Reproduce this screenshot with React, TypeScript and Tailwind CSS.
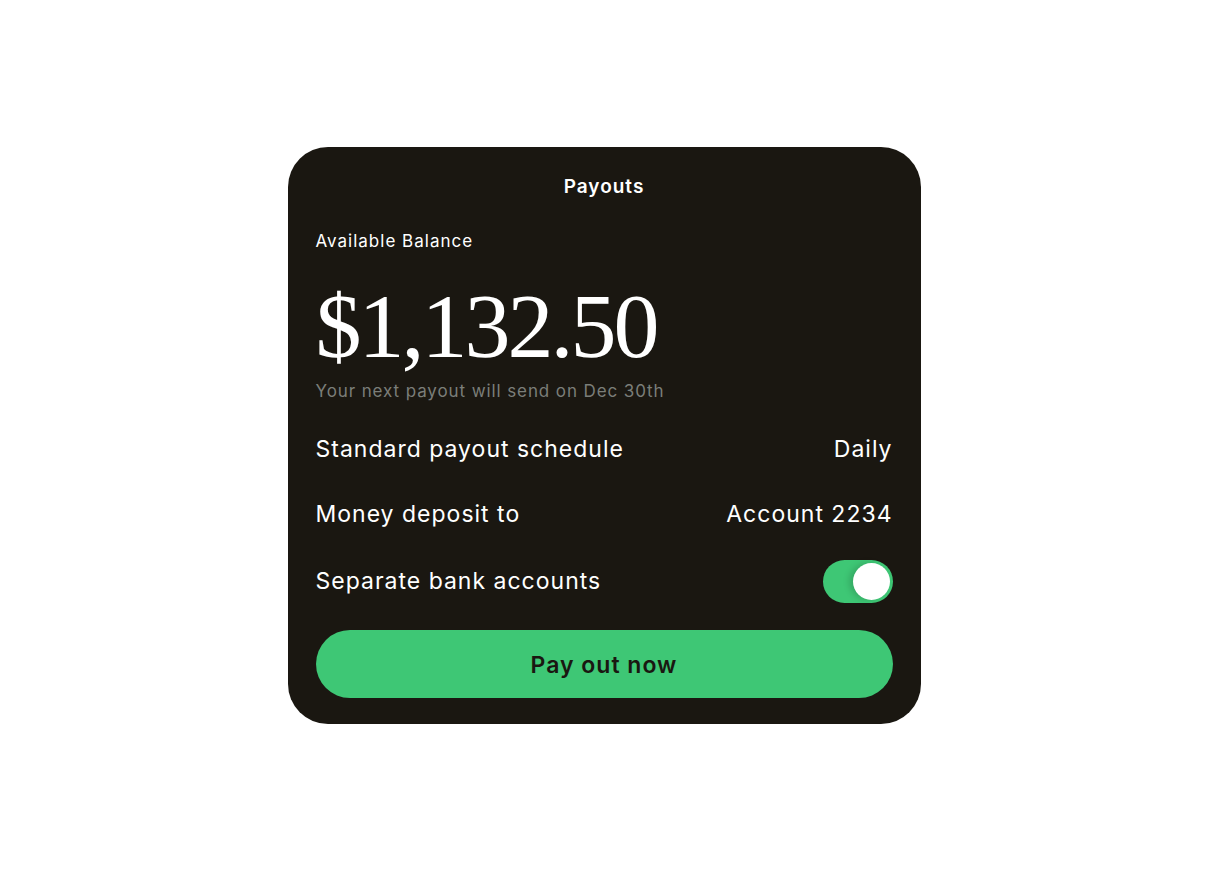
import { useState } from "react";

const sans = { fontFamily: "Inter, 'Liberation Sans', sans-serif" };

function Row({ label, value }: { label: string; value: string }) {
  return (
    <div className="flex h-[40px] items-center justify-between text-[23px] tracking-[1px] text-white">
      <span>{label}</span>
      <span>{value}</span>
    </div>
  );
}

export default function App() {
  const [separate, setSeparate] = useState(true);

  return (
    <div className="flex min-h-screen items-start justify-center bg-white pt-[147px]" style={sans}>
      <div className="flex h-[577px] w-[633px] flex-col rounded-[40px] bg-[#1a1711] px-7 pt-[28px]">
        <div className="text-center text-[19px] font-semibold leading-[24px] tracking-[1px] text-white">
          Payouts
        </div>

        <div className="mt-[30px] text-[17px] leading-[24px] tracking-[1px] text-white">
          Available Balance
        </div>

        <div
          className="mt-[27px] text-[92px] leading-none tracking-[-3px] text-white"
          style={{ fontFamily: "'Liberation Serif', serif" }}
        >
          $1,132.50
        </div>

        <div className="mt-[7px] text-[17px] leading-[24px] tracking-[0.9px] text-[#7b7e79]">
          Your next payout will send on Dec 30th
        </div>

        <div className="mt-[26px] flex flex-col gap-[25px]">
          <Row label="Standard payout schedule" value="Daily" />
          <Row label="Money deposit to" value="Account 2234" />
        </div>

        <div className="mt-[26px] flex h-[43px] items-center justify-between text-[23px] tracking-[1px] text-white">
          <span>Separate bank accounts</span>
          <button
            onClick={() => setSeparate(!separate)}
            className={`flex h-[43px] w-[70px] items-center rounded-full p-[3px] ${
              separate ? "justify-end bg-[#3ec775]" : "justify-start bg-[#3a3731]"
            }`}
            aria-label="Toggle separate bank accounts"
          >
            <span className="h-[37px] w-[37px] rounded-full bg-white shadow-[-4px_0_6px_rgba(0,0,0,0.15)]" />
          </button>
        </div>

        <button className="mt-[27px] h-[68px] w-full rounded-full bg-[#3ec775] pt-[3px] text-[23px] font-semibold tracking-[1px] text-[#1a1711]">
          Pay out now
        </button>
      </div>
    </div>
  );
}
